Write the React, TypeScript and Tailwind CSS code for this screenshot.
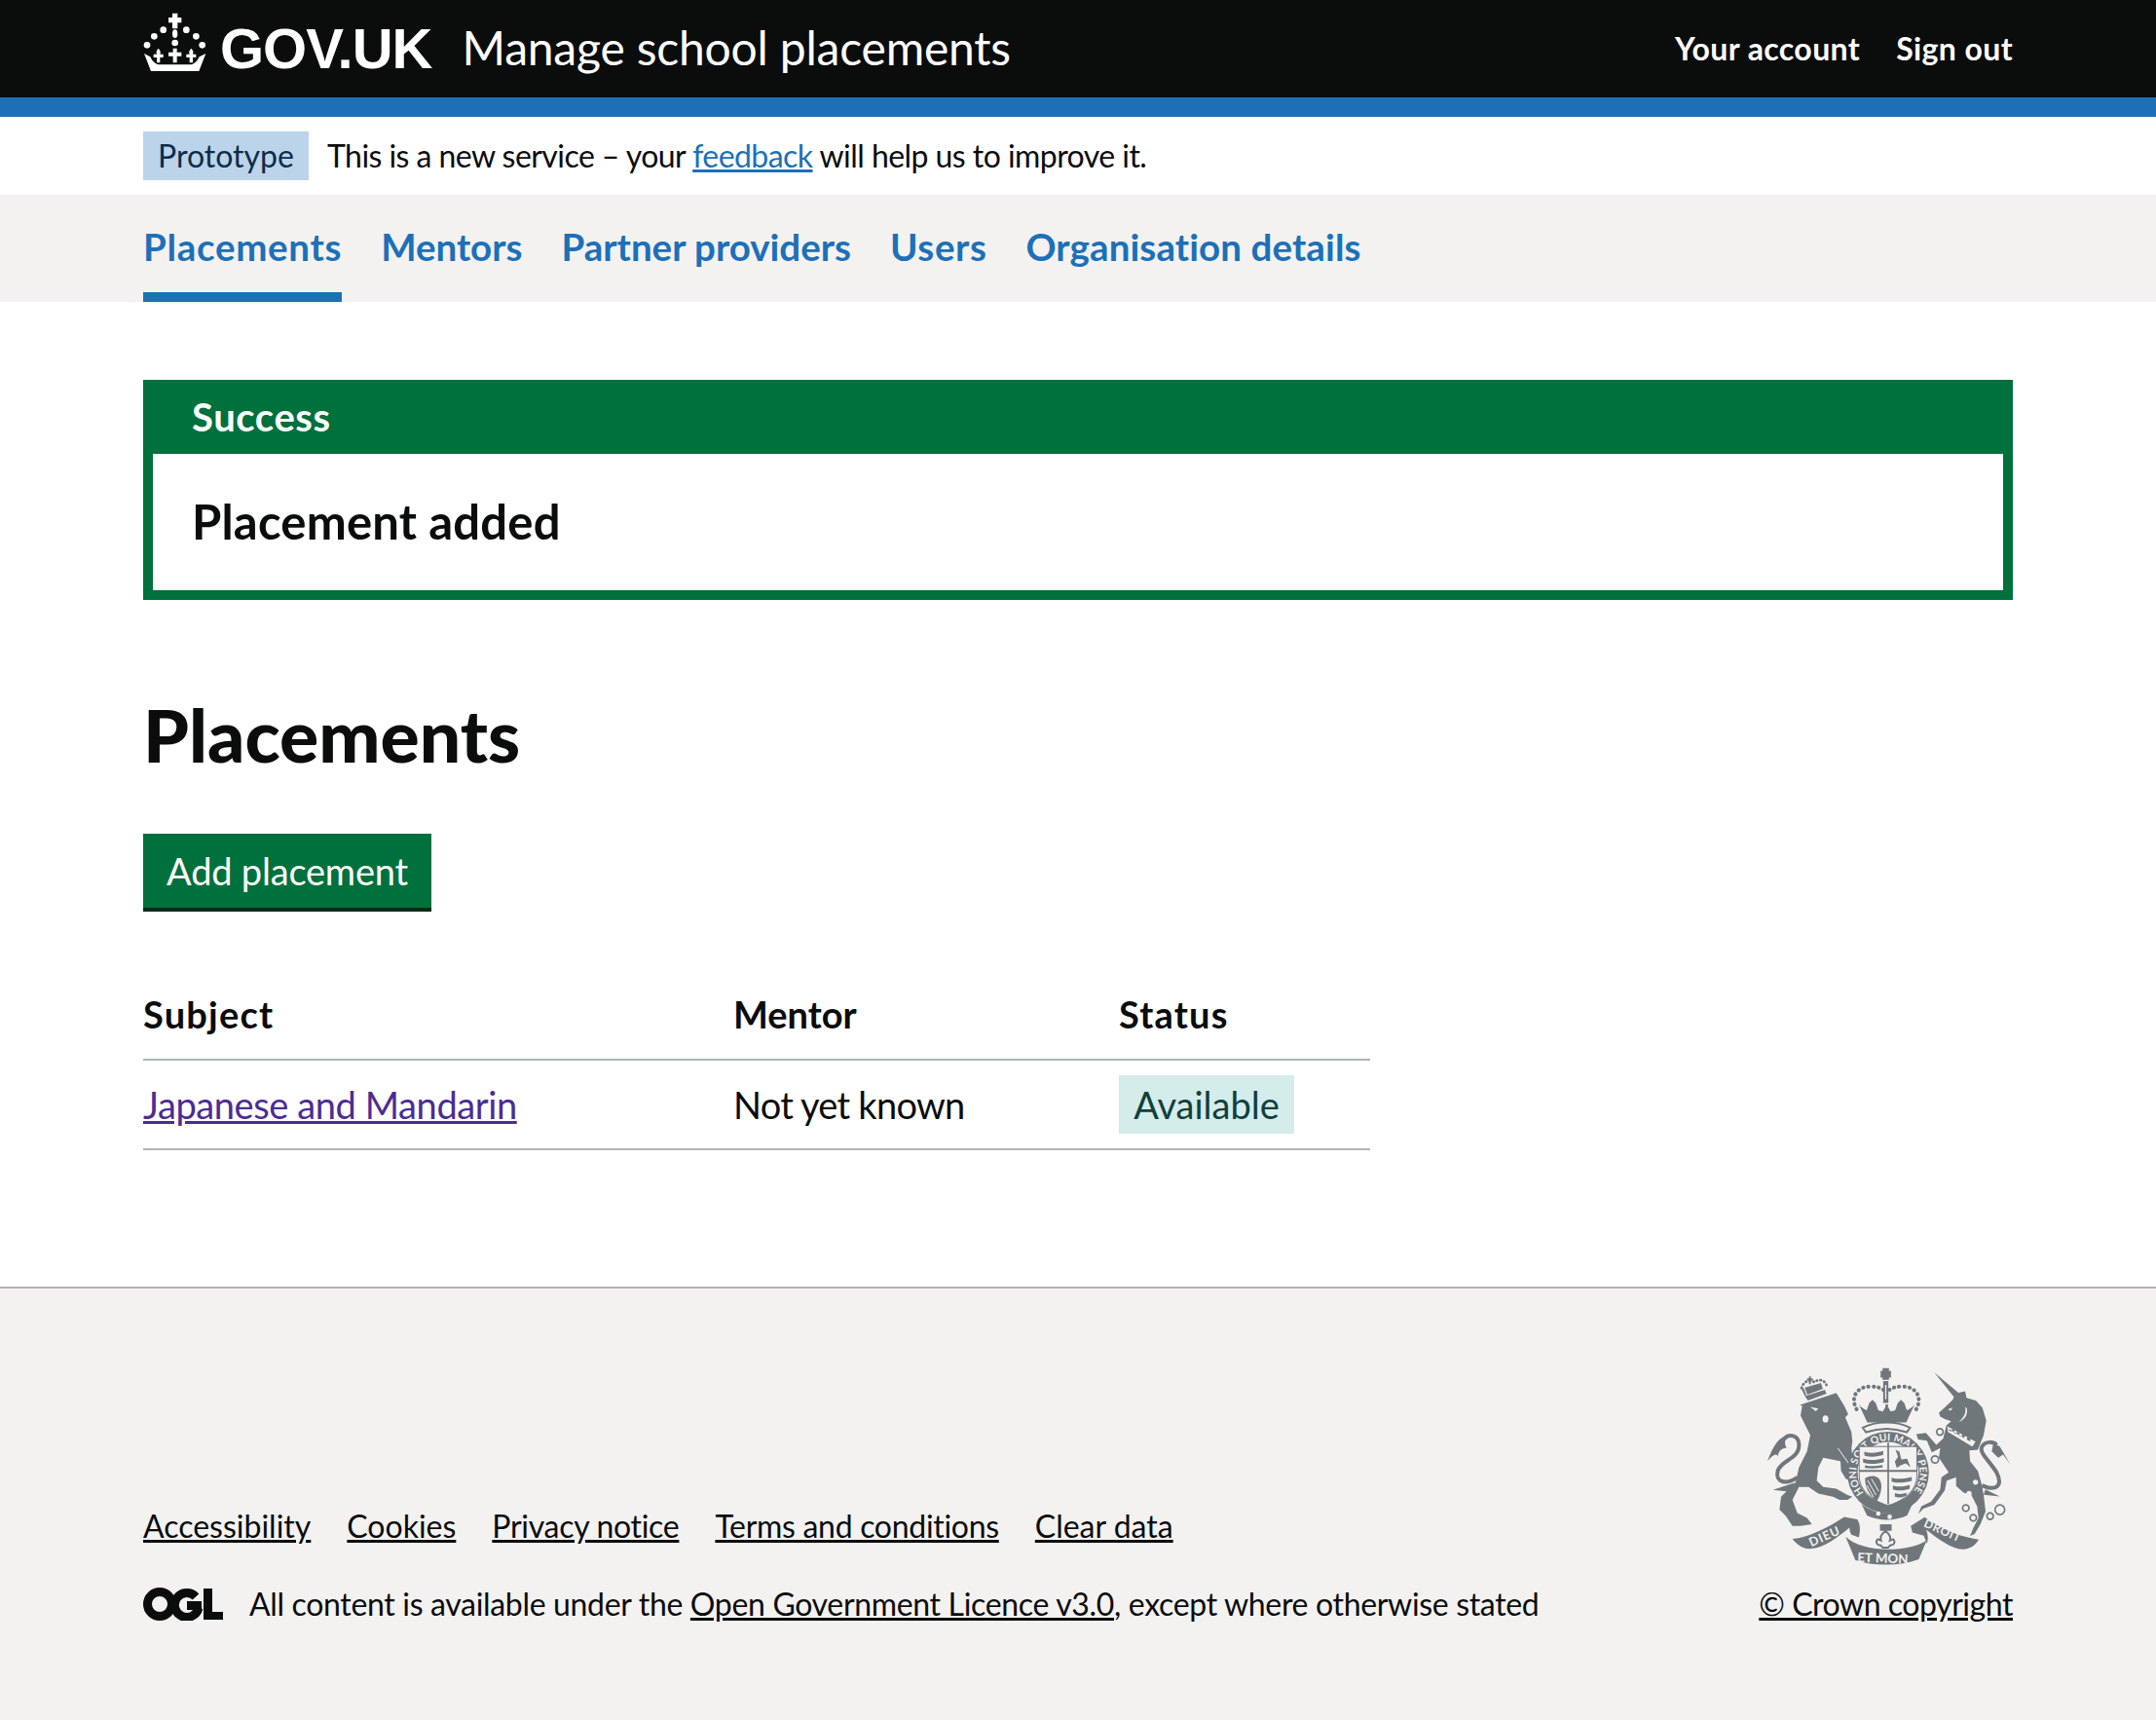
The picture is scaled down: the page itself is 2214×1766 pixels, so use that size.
const font = "[font-family:Lato,'Liberation_Sans',sans-serif]";
const grey = "#6f777b";
const paper = "#f3f2f1";

function Crown() {
  return (
    <svg viewBox="50 40 195 180" className="w-[65px] h-[60px] -mt-[14px] shrink-0 fill-white">
      <path d="M140 42h16v13h12v16h-12v18h-16V71h-12V55h12z" />
      <ellipse cx="148" cy="105" rx="8" ry="13" />
      <circle cx="112" cy="93" r="10" />
      <circle cx="183" cy="93" r="10" />
      <circle cx="84" cy="113" r="10" />
      <circle cx="213" cy="113" r="10" />
      <circle cx="62" cy="140" r="10" />
      <circle cx="232" cy="140" r="10" />
      <circle cx="148" cy="133" r="10" />
      <path d="M142 150h12v12h14v12h-14v20h-12v-20h-14v-12h14z" />
      <path d="M97 150c6 6 8 12 5 18h10v10h-10v16h-10v-16H82v-10h10c-3-6-1-12 5-18zM198 150c6 6 8 12 5 18h10v10h-10v16h-10v-16h-10v-10h10c-3-6-1-12 5-18z" />
      <path d="M53 166l19 10c6 13 14 22 26 24h99c12-2 20-11 26-24l20-10-21 54H74z" />
    </svg>
  );
}

function OglLogo() {
  return (
    <svg viewBox="0 0 82 34" className="w-[82px] h-[34px] shrink-0" fill="#0b0c0c">
      <circle cx="17" cy="17" r="12.500" fill="none" stroke="#0b0c0c" strokeWidth="9" />
      <path d="M54 9.500A12.500 12.500 0 1 0 57 21" fill="none" stroke="#0b0c0c" strokeWidth="9" />
      <path d="M45 14h15v9H45zM62 1h9v24h11v8H62z" />
    </svg>
  );
}

function Crest() {
  return (
    <svg viewBox="60 30 760 625" className="w-[253px] h-[208px]" fill={grey}>
      {/* lion */}
      <g transform="translate(60 30)">
        <path d="M103 122L215 85l10 15 15 25 12 25-9 10 19 45 3 30-3 20 8 70 12 15-17 15-20-5-15-25-2-30-53-10-15 30-5 40 20 20 40 5 35 20 15 5-15 10-25 0-20-10-45-10-30-20-30 0-10 20-10 20 15 40 30 15 15 20-35 5-25 0-20-30-20-20 5-40 45-45 10-45 25-50 10-50-15-30-15-30 5-30z" />
        <path d="M220 255l50 70" fill="none" stroke={paper} strokeWidth="3" />
        <path d="M95 345C60 370 25 360 35 325 45 290 105 290 100 240 97 215 70 210 55 225" fill="none" stroke={grey} strokeWidth="12" />
        <path d="M60 218C30 225 15 265 3 295c17-20 27-25 32-15 3-18 13-25 27-25-7-15-7-25 3-30zM85 362l-65 22 55 6z" />
        <path d="M118 95l62-20 5 12-57 21z" />
        <path d="M108 70c5-20 25-30 40-18 12-12 30-8 37 8" fill="none" stroke={grey} strokeWidth="8" strokeDasharray="2 10" strokeLinecap="round" />
        <path d="M131 34h6v6h6v6h-6v12h-6V46h-6v-6h6zM118 68l50-14 6 18-48 18zM108 72l10 22 5-2-8-22z" />
        <path d="M135 128l25 5-8 8zM173 165a9 11 0 1 0 18 0 9 11 0 1 0-18 0z" fill={paper} />
        <path d="M175 310c15 5 30 0 40-10l5 12 8 8 0 30-12-12-8-20z" fill={paper} />
      </g>

      {/* royal crown */}
      <path d="M418 38h20v10l6-2v22l-6-2v8h-20v-8l-6 2V46l6 2zM420 78h16v68h-16z" />
      <path d="M426 90h4v44h-4z" fill={paper} />
      <path d="M345 150c8 10 16 14 24 18l8-22 10-10 10 10 8 22 14 4 8-14 0-8 8 0 0 8 8 14 14-4 8-22 10-10 10 10 8 22c8-4 16-8 24-18l-26 56H371z" />
      <path d="M357 222c40-22 106-22 146 0l-10 14c-40-14-86-14-126 0z" fill="none" stroke={grey} strokeWidth="6" />
      <path d="M338 165c-22-40 5-70 40-70 20 0 35 3 42 10M522 165c22-40-5-70-40-70-20 0-35 3-42 10" fill="none" stroke={grey} strokeWidth="12" strokeDasharray="1 15" strokeLinecap="round" />

      {/* garter and shield */}
      <circle cx="435" cy="360" r="126" />
      <path id="garter" d="M360 423A98 98 0 1 1 510 423" fill="none" />
      <text fontSize="31" fontWeight="700" fill={paper} className={font} letterSpacing="0.5">
        <textPath href="#garter">HONI SOIT QUI MAL Y PENSE</textPath>
      </text>
      <circle cx="435" cy="360" r="94" fill={paper} />
      <path d="M346 280h178v90c0 46-42 78-89 92-47-14-89-46-89-92z" fill={paper} stroke={grey} strokeWidth="3" />
      <path d="M433 268h5v190h-5zM346 352h178v6H346z" />
      <path d="M362 296c20 6 40 4 58-2v12c-18 6-38 8-58 2zM358 318c22 6 44 4 64-2v12c-20 6-42 8-64 2zM364 338c18 4 36 3 54-1v8c-18 3-36 3-54 1z" />
      <path d="M458 290l12 6 6 24 18-2 10 26-14-12-16 6-12 8-6-20 10-14z" />
      <path d="M446 376c20 6 40 4 62-2v12c-22 6-42 8-62 2zM450 400c18 6 36 4 52-2v12c-16 6-34 8-52 2zM456 424c14 4 26 3 36-1v8c-10 6-24 8-36 4z" />
      <path d="M364 378c15-8 28-10 40-2 12 10 14 32 4 58l-8 16c-22-18-36-42-36-72z" />
      <path d="M372 384l26 46M384 380l22 38M370 400l20 36" stroke={paper} strokeWidth="3" fill="none" />
      <path d="M352 455c35 36 110 44 160-2l-18 40c-38 18-88 18-124 0z" />
      <circle cx="405" cy="487" r="7" fill={paper} />
      <circle cx="440" cy="497" r="7" fill={paper} />

      {/* unicorn */}
      <g transform="translate(480 30)">
        <path d="M98 22l74 62 10-2 11-2 4 20 29 8 20 22 12 40-8 45-18 45-26 2 2 33 24 30 13 45 5 30 6 50-16 40-18 30-14 6 10-24 16-32-4-35-18-35-24-8-23-20 0-27-29 10-6 30-32 45-34 12-16 16 10-24 30-14 28-38 4-37 22-15-30-45 4-30-26 13-15-36-27-4-6-16 30-4 32 37 21-20 10-40 15-13-20-7-14-7-4-12 20-18 23-23 3-8z" />
        <path d="M138 188l87 47-10 15-75-45z" fill={paper} />
        <path d="M144 192l-2 8 8 4 2-8 8 4-2 8 8 4 2-8 8 4-2 8 8 4 2-8 8 4-2 8 8 4 2-8 10 6-2 8-66-38z" />
        <path d="M192 128c6 14-2 32-18 46 18-8 28-22 24-42zM140 135l14-5-6 10z" fill={paper} />
        <circle cx="238" cy="315" r="10" fill={paper} />
        <circle cx="225" cy="360" r="8" fill={paper} />
        <circle cx="205" cy="395" r="8" fill={paper} />
        <g fill="none" stroke={grey} strokeWidth="5">
          <circle cx="115" cy="205" r="10" />
          <circle cx="100" cy="290" r="11" />
          <circle cx="195" cy="440" r="10" />
          <circle cx="218" cy="470" r="10" />
          <circle cx="270" cy="465" r="10" />
          <circle cx="300" cy="445" r="15" />
        </g>
        <path d="M245 370c45 20 65 0 45-40-25-40-55-60-45-80 10-18 35-15 45-5" fill="none" stroke={grey} strokeWidth="12" />
        <path d="M280 238l20 12 32 55-22-30-15 10-20-20zM255 382l45 22-50-5z" />
      </g>

      {/* motto */}
      <path d="M410 520h36v20h-36z" />
      <path d="M427 540c12 10 18 20 14 30l10-4c8 8 2 20-8 18l-8 8h-16l-8-8c-10 2-16-10-8-18l10 4c-4-10 2-20 14-30z" fill={paper} stroke={grey} strokeWidth="6" />
      <path d="M140 565c50-5 110-35 160-68l40 8c10 15 10 35 5 55l-23-8c-4-7-6-14-6-22-36 30-76 60-116 65-25 3-45-10-60-30z" />
      <path d="M715 567c-55-7-115-32-167-69l-43 27 5 20 35 10 10 25c5-15 3-32-3-44 38 29 78 59 113 61 20 1 40-12 50-30z" />
      <path d="M304 558c50 50 190 50 250 12l-24 58c-60 22-140 22-196 2z" />
      <text x="340" y="636" fontSize="40" fill={paper} className={font} fontWeight="700" transform="rotate(2 340 636)">ET MON</text>
      <text x="198" y="590" fontSize="38" fill={paper} className={font} fontWeight="700" letterSpacing="3" transform="rotate(-24 198 590)">DIEU</text>
      <text x="543" y="526" fontSize="36" fill={paper} className={font} fontWeight="700" letterSpacing="2" transform="rotate(24 543 526)">DROIT</text>
    </svg>
  );
}

export default function App() {
  return (
    <div className={`min-h-[1766px] flex flex-col bg-white text-[#0b0c0c] ${font}`}>
      <header className="bg-[#0b0c0c] border-b-[20px] border-[#1d70b8] h-[120px]">
        <div className="w-[1920px] mx-auto h-[100px] flex items-center text-white">
          <Crown />
          <span className="ml-[14px] -mt-[2px] text-[58px] font-bold [font-family:'Liberation_Sans',sans-serif] tracking-[-1px]">GOV.UK</span>
          <span className="ml-[31px] -mt-[2px] text-[48px] tracking-[-0.2px]">Manage school placements</span>
          <nav className="ml-auto flex gap-[37px] text-[32px] font-bold tracking-[0.4px]">
            <a>Your account</a>
            <a>Sign out</a>
          </nav>
        </div>
      </header>

      <div className="w-[1920px] mx-auto h-[80px] flex items-center text-[32px]">
        <strong className="h-[50px] w-[170px] flex items-center justify-center bg-[#bbd4ea] text-[#0c2d4a] font-normal">Prototype</strong>
        <span className="ml-[19px] tracking-[-0.55px]">
          This is a new service – your <a className="text-[#1d70b8] underline">feedback</a> will help us to improve it.
        </span>
      </div>

      <nav className="bg-[#f3f2f1] h-[110px]">
        <ul className="w-[1920px] mx-auto h-full flex gap-[40px] text-[38.5px] font-bold text-[#1d70b8]">
          <li className="flex items-center h-full pt-[8px] border-b-[10px] border-[#1d70b8] tracking-[0.7px]">Placements</li>
          <li className="flex items-center h-full pt-[8px] border-b-[10px] border-transparent">Mentors</li>
          <li className="flex items-center h-full pt-[8px] border-b-[10px] border-transparent">Partner providers</li>
          <li className="flex items-center h-full pt-[8px] border-b-[10px] border-transparent tracking-[0.6px]">Users</li>
          <li className="flex items-center h-full pt-[8px] border-b-[10px] border-transparent tracking-[0.1px]">Organisation details</li>
        </ul>
      </nav>

      <main className="w-[1920px] mx-auto flex-1 pt-[80px]">
        <div className="border-[10px] border-[#00703c] h-[226px]">
          <div className="bg-[#00703c] h-[66px] pl-[40px] text-white text-[40px] font-bold leading-[56px] tracking-[0.6px]">Success</div>
          <p className="pl-[40px] pt-[34px] text-[49px] font-bold leading-[70px] tracking-[0.2px]">Placement added</p>
        </div>

        <h1 className="mt-[98px] text-[75px] font-black leading-[80px]">Placements</h1>

        <button className="mt-[62px] block h-[80px] w-[296px] bg-[#00703c] text-white text-[38px] border-b-[4px] border-[#002d18] tracking-[-0.2px]">Add placement</button>

        <table className="mt-[60px] w-[1260px] table-fixed text-[38px] text-left border-collapse">
          <thead>
            <tr className="h-[92px] border-b-[2px] border-[#b1b4b6]">
              <th className="w-[606px] font-bold tracking-[1.2px]">Subject</th>
              <th className="w-[396px] font-bold">Mentor</th>
              <th className="font-bold tracking-[1.2px]">Status</th>
            </tr>
          </thead>
          <tbody>
            <tr className="h-[92px] border-b-[2px] border-[#b1b4b6]">
              <td className="tracking-[-0.4px]"><a className="text-[#4c2c92] underline">Japanese and Mandarin</a></td>
              <td className="tracking-[-0.75px]">Not yet known</td>
              <td><span className="inline-flex items-center justify-center h-[60px] w-[180px] bg-[#d4ecea] text-[#10403c]">Available</span></td>
            </tr>
          </tbody>
        </table>
      </main>

      <footer className="h-[445px] bg-[#f3f2f1] border-t-[2px] border-[#b1b4b6]">
        <div className="w-[1920px] mx-auto h-full flex justify-between pt-[79px] text-[32px]">
          <div className="self-end pb-[95px]">
            <ul className="flex gap-[37px] underline">
              <li>Accessibility</li>
              <li>Cookies</li>
              <li className="tracking-[-0.3px]">Privacy notice</li>
              <li className="tracking-[-0.3px]">Terms and conditions</li>
              <li>Clear data</li>
            </ul>
            <div className="mt-[32px] flex items-center">
              <OglLogo />
              <span className="ml-[27px] tracking-[-0.33px]">All content is available under the <a className="underline">Open Government Licence v3.0</a>, except where otherwise stated</span>
            </div>
          </div>
          <div className="flex flex-col items-end">
            <Crest />
            <a className="mt-[13px] underline tracking-[-0.45px]">© Crown copyright</a>
          </div>
        </div>
      </footer>
    </div>
  );
}
